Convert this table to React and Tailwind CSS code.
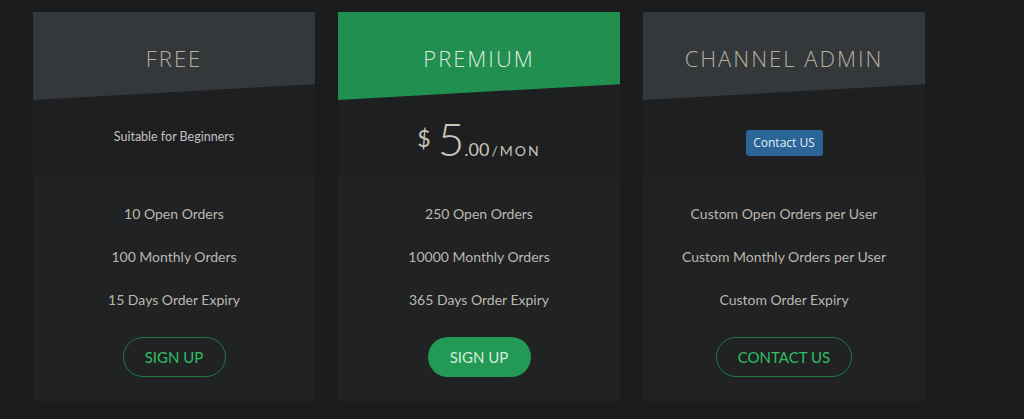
const plans = [
  {
    name: 'FREE',
    header: 'bg-[#35383b] text-[#b7b0a0]',
    features: ['10 Open Orders', '100 Monthly Orders', '15 Days Order Expiry'],
    cta: 'SIGN UP',
    filled: false,
    ctaWidth: 'w-[103px]',
    top: (
      <span className="text-[12.5px] text-[#c3c3c3] font-['Lato',sans-serif] -mt-[2px]">Suitable for Beginners</span>
    ),
  },
  {
    name: 'PREMIUM',
    header: 'bg-[#218f50] text-[#dfeadf]',
    features: ['250 Open Orders', '10000 Monthly Orders', '365 Days Order Expiry'],
    cta: 'SIGN UP',
    filled: true,
    ctaWidth: 'w-[103px]',
    top: (
      <span className="flex items-baseline text-[#c9c5b9] font-['Lato',sans-serif] mt-[4px]">
        <span className="text-[23px] mr-[7px] relative -top-[9px]">$</span>
        <span className="text-[46px] leading-none font-light">5</span>
        <span className="text-[18px]">.00</span>
        <span className="text-[14px] tracking-[2px] ml-[2px]">/MON</span>
      </span>
    ),
  },
  {
    name: 'CHANNEL ADMIN',
    header: 'bg-[#35383b] text-[#b7b0a0]',
    features: ['Custom Open Orders per User', 'Custom Monthly Orders per User', 'Custom Order Expiry'],
    cta: 'CONTACT US',
    filled: false,
    ctaWidth: 'w-[136px]',
    top: (
      <span className="mt-[9px] h-[26px] w-[77px] flex items-center justify-center rounded-[3px] bg-[#2b6496] text-[12px] text-[#e6eef5] font-['Open_Sans',sans-serif]">
        Contact US
      </span>
    ),
  },
];

function PlanCard({ plan }) {
  return (
    <div className="w-[282px] h-[389px] flex flex-col bg-[#1e1f21]">
      <div
        className={`h-[88px] flex justify-center pt-[34px] [clip-path:polygon(0_0,100%_0,100%_82%,0_100%)] ${plan.header}`}
      >
        <span className="text-[22px] leading-[24px] tracking-[2px] font-light font-['Open_Sans',sans-serif]">
          {plan.name}
        </span>
      </div>
      <div className="h-[77px] flex items-center justify-center">{plan.top}</div>
      <div className="flex-1 bg-[#212224] flex flex-col items-center pt-[27px] font-['Lato',sans-serif]">
        <div className="flex flex-col items-center gap-[23px]">
          {plan.features.map((f) => (
            <span key={f} className="text-[14px] leading-[20px] text-[#bbb7ae]">
              {f}
            </span>
          ))}
        </div>
        <button
          type="button"
          className={
            plan.filled
              ? `mt-[27px] h-[40px] ${plan.ctaWidth} rounded-full bg-[#229a55] text-[15px] text-[#d8eadc]`
              : `mt-[27px] h-[40px] ${plan.ctaWidth} rounded-full border border-[#1f7a42] text-[15px] text-[#2fbf64]`
          }
        >
          {plan.cta}
        </button>
      </div>
    </div>
  );
}

export default function App() {
  return (
    <div className="w-[1024px] h-[419px] bg-[#1b1c1e] flex gap-[23px] pl-[33px] pt-[12px]">
      {plans.map((p) => (
        <PlanCard key={p.name} plan={p} />
      ))}
    </div>
  );
}
